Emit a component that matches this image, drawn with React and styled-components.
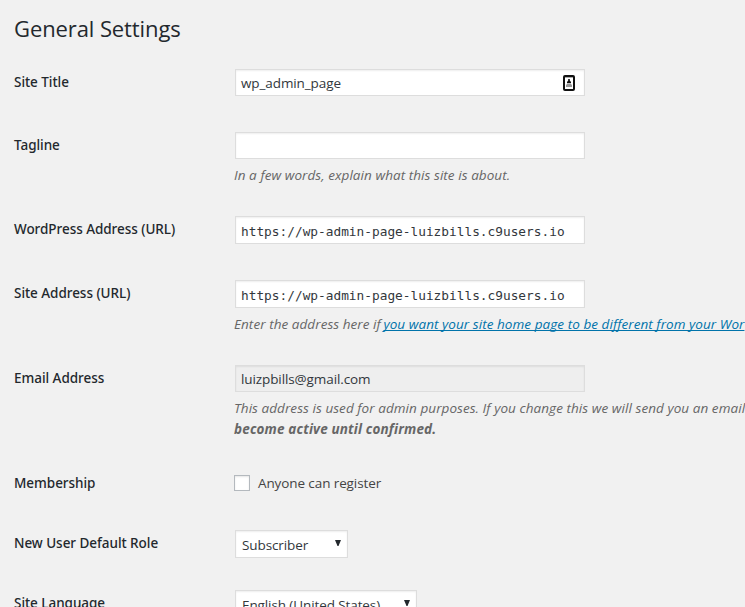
import React from 'react';
import styled, { createGlobalStyle } from 'styled-components';

const GlobalStyle = createGlobalStyle`
  * { box-sizing: border-box; }
  body {
    margin: 0;
    background: #f1f1f1;
    color: #444;
    font: 13.5px/21px "Open Sans", "Noto Sans", sans-serif;
    letter-spacing: -0.1px;
    overflow: hidden;
  }
`;

const Page = styled.main`
  width: 100%;
  height: 607px;
  padding-left: 14px;
  overflow: hidden;
`;

const Heading = styled.h1`
  height: 54px;
  margin: 0;
  padding-top: 13px;
  color: #23282d;
  font-size: 22px;
  font-weight: 400;
  line-height: 30px;
`;

const Row = styled.div`
  display: grid;
  grid-template-columns: 220px 1fr;
  height: ${(p) => p.$height}px;
`;

const Label = styled.label`
  padding-top: 18px;
  color: #23282d;
  font-family: "Noto Sans", sans-serif;
  font-size: 13.5px;
  font-weight: 500;
  line-height: 20px;
  letter-spacing: -0.04px;
  white-space: nowrap;
`;

const Cell = styled.div`
  min-width: 0;
  padding-top: 15px;
  white-space: nowrap;
`;

const Field = styled.div`
  display: flex;
  align-items: center;
  justify-content: space-between;
  width: 350px;
  height: ${(p) => (p.$code ? 28 : 27)}px;
  margin-left: 1px;
  padding: ${(p) => (p.$code ? '2px 9px 0 5px' : '1px 9px 0 5px')};
  border: 1px solid #ddd;
  background: ${(p) => (p.$disabled ? '#eee' : '#fff')};
  box-shadow: inset 0 1px 2px rgba(0, 0, 0, 0.07);
  color: #32373c;
  ${(p) =>
    p.$code &&
    `font-family: "DejaVu Sans Mono", monospace;
     font-size: 12.8px;
     letter-spacing: 0;`}
`;

const Description = styled.p`
  margin: 6px 0 0;
  color: #666;
  font-style: italic;
  letter-spacing: 0.06px;

  strong {
    letter-spacing: 0.16px;
  }
`;

const Link = styled.a`
  margin-left: -1px;
  color: #0073aa;
  text-decoration: underline;
  text-decoration-thickness: 1px;
  text-decoration-skip-ink: none;
  text-underline-offset: 1px;
`;

const Option = styled.div`
  display: flex;
  align-items: center;
  gap: 8px;
  height: 26px;
`;

const Checkbox = styled.span`
  width: 16px;
  height: 16px;
  border: 1px solid #b4b9be;
  background: #fff;
  box-shadow: inset 0 1px 2px rgba(0, 0, 0, 0.1);
`;

const Select = styled.div`
  display: flex;
  align-items: center;
  justify-content: space-between;
  width: ${(p) => p.$width}px;
  height: 28px;
  margin-left: 1px;
  padding: 2px 6px 0 6px;
  border: 1px solid #ddd;
  background: #fff;
  box-shadow: inset 0 1px 2px rgba(0, 0, 0, 0.07);
  color: #32373c;

  svg {
    margin-top: -4px;
  }
`;

const Arrow = () => (
  <svg width="6" height="6" viewBox="0 0 6 6">
    <path d="M0 0H6L3.5 6H2.5Z" fill="#23282d" />
  </svg>
);

const ContactIcon = () => (
  <svg width="12" height="16" viewBox="0 0 12 16">
    <rect x="1" y="1" width="10" height="14" rx="1" fill="#fff" stroke="#111" strokeWidth="2" />
    <path d="M2 2.5H10" stroke="#aaa" strokeWidth="1" />
    <path d="M5.2 4H6.8V5.5L8 7V8.2H4V7L5.2 5.5Z" fill="#111" />
    <path d="M4 9H8L9 10V12H3V10Z" fill="#999" />
  </svg>
);

export default function App() {
  return (
    <>
      <GlobalStyle />
      <Page>
        <Heading>General Settings</Heading>
        <Row $height={63}>
          <Label>Site Title</Label>
          <Cell>
            <Field>
              wp_admin_page
              <ContactIcon />
            </Field>
          </Cell>
        </Row>
        <Row $height={84}>
          <Label>Tagline</Label>
          <Cell>
            <Field />
            <Description>In a few words, explain what this site is about.</Description>
          </Cell>
        </Row>
        <Row $height={64}>
          <Label>WordPress Address (URL)</Label>
          <Cell>
            <Field $code>https://wp-admin-page-luizbills.c9users.io</Field>
          </Cell>
        </Row>
        <Row $height={85}>
          <Label>Site Address (URL)</Label>
          <Cell>
            <Field $code>https://wp-admin-page-luizbills.c9users.io</Field>
            <Description>
              Enter the address here if{' '}
              <Link>you want your site home page to be different from your Wor</Link>
            </Description>
          </Cell>
        </Row>
        <Row $height={105}>
          <Label>Email Address</Label>
          <Cell>
            <Field $disabled>luizpbills@gmail.com</Field>
            <Description>
              This address is used for admin purposes. If you change this we will send you an email
              <br />
              <strong>become active until confirmed.</strong>
            </Description>
          </Cell>
        </Row>
        <Row $height={60}>
          <Label>Membership</Label>
          <Cell>
            <Option>
              <Checkbox />
              Anyone can register
            </Option>
          </Cell>
        </Row>
        <Row $height={60}>
          <Label>New User Default Role</Label>
          <Cell>
            <Select $width={113}>
              Subscriber
              <Arrow />
            </Select>
          </Cell>
        </Row>
        <Row $height={60}>
          <Label>Site Language</Label>
          <Cell>
            <Select $width={182}>
              English (United States)
              <Arrow />
            </Select>
          </Cell>
        </Row>
      </Page>
    </>
  );
}
